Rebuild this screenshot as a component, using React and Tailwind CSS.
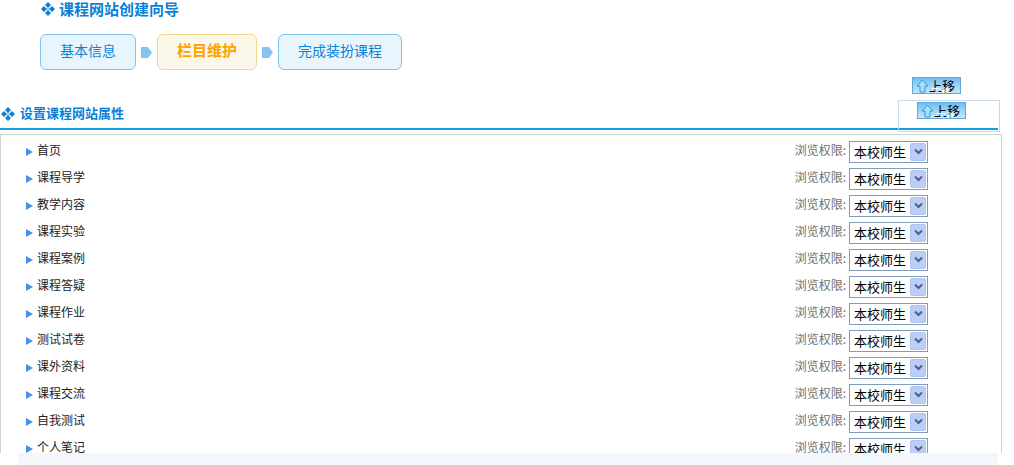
const rows = ["首页","课程导学","教学内容","课程实验","课程案例","课程答疑","课程作业","测试试卷","课外资料","课程交流","自我测试","个人笔记"];

function Diamond({ className }) {
  return (
    <svg className={className} width="14" height="14" viewBox="0 0 14 14">
      <path d="M7 0 10 3 7 6 4 3Z M3 4 6 7 3 10 0 7Z M11 4 14 7 11 10 8 7Z M7 8 10 11 7 14 4 11Z" fill="#0a7fd6" />
      <path d="M7 5.5 8.5 7 7 8.5 5.5 7Z" fill="#0a7fd6" opacity="0.45" />
    </svg>
  );
}

function StepArrow() {
  return (
    <svg width="11" height="13" viewBox="0 0 11 13" className="shrink-0 mt-[1px]">
      <path d="M0 1H7L11 6.5 7 12H0Z" fill="#85c4f0" />
    </svg>
  );
}

function Step({ label, active, w }) {
  return (
    <div className={`h-9 ${w} flex items-center justify-center rounded-md border pb-[4px] ${active ? "border-[#f0d98a] bg-[#fcf8e9] text-[#ffa200] font-bold text-[15px]" : "border-[#82c2ee] bg-[#e9f5fc] text-[#0a84d8] text-sm"}`}>
      {label}
    </div>
  );
}

function MoveBtn({ className }) {
  return (
    <div className={`absolute w-[49px] h-[17px] overflow-hidden border border-[#5fa8de] bg-gradient-to-b from-[#6cc0f4] to-[#c5e6fb] ${className}`}>
      <svg width="13" height="14" viewBox="0 0 13 14" className="absolute left-[3px] top-[1px]">
        <path d="M6.5 1 12 7H9V13H4V7H1Z" fill="#9fe4f8" stroke="#3a96c8" strokeWidth="1" />
      </svg>
      <span className="absolute left-[16px] top-0 text-[13px] leading-[15px] text-black whitespace-nowrap">上移</span>
      <span className="absolute left-[18px] top-[8px] text-[10px] leading-[12px] text-white whitespace-nowrap">下移</span>
    </div>
  );
}

function Row({ label }) {
  return (
    <div className="h-[27px] flex items-center pl-[25px] pr-[73px]">
      <svg width="7" height="8" viewBox="0 0 7 8" className="mr-[4px] mt-[3px] shrink-0">
        <path d="M0 0 7 4 0 8Z" fill="#3f94e4" />
      </svg>
      <span className="text-xs text-[#222] flex-1 pb-[2px]">{label}</span>
      <span className="text-xs text-[#6f6f6f] mr-[3px] pb-[1px]">浏览权限:</span>
      <div className="w-[79px] h-[22px] border border-[#7f9db9] bg-white flex items-center mt-[2px]">
        <span className="flex-1 pl-[4px] pb-[1px] text-[13px] leading-none text-black whitespace-nowrap">本校师生</span>
        <span className="w-[16px] h-[18px] mr-[1px] bg-[#bccdf7] border border-[#b0c4ef] rounded-[2px] flex items-center justify-center">
          <svg width="9" height="7" viewBox="0 0 9 7"><path d="M1 1.5 4.5 5 8 1.5" fill="none" stroke="#4d6185" strokeWidth="2" /></svg>
        </span>
      </div>
    </div>
  );
}

export default function App() {
  return (
    <div className="relative w-[1014px] h-[465px] overflow-hidden bg-white font-['SimSun','Noto_Sans_CJK_SC',sans-serif]">
      <div className="h-[34px] pl-[41px] flex items-start">
        <Diamond className="mt-[2px]" />
        <span className="ml-[4px] text-[15px] leading-[17px] font-bold text-[#0a7fd6]">课程网站创建向导</span>
      </div>
      <div className="h-[36px] pl-[40px] flex items-center gap-[5px]">
        <Step label="基本信息" w="w-[96px]" />
        <StepArrow />
        <Step label="栏目维护" active w="w-[100px]" />
        <StepArrow />
        <Step label="完成装扮课程" w="w-[124px]" />
      </div>
      <div className="mt-[35px] h-[23px] w-[998px] pl-[1px] flex items-start">
        <Diamond className="mt-[2px]" />
        <span className="ml-[5px] text-[13px] leading-[15px] font-bold text-[#0a7fd6]">设置课程网站属性</span>
      </div>
      <div className="h-[2px] w-[998px] bg-[#1a9be8]" />
      <div className="mt-[4px] w-[1002px] h-[319px] overflow-hidden border border-[#cdd2d8] border-b-0 pt-[2px]">
        {rows.map((r) => <Row key={r} label={r} />)}
      </div>
      <div className="ml-[18px] w-[980px] h-[12px] bg-[#f3f6fb]" />
      <div className="absolute left-[898px] top-[100px] w-[102px] h-[32px] border border-[#c8dcec]" />
      <MoveBtn className="left-[912px] top-[77px]" />
      <MoveBtn className="left-[917px] top-[102px]" />
    </div>
  );
}
